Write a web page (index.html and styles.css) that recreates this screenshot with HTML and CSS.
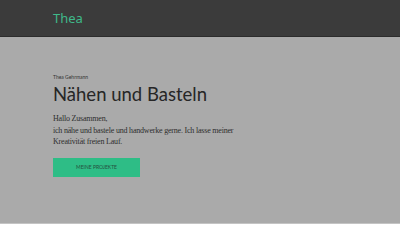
FILE: index.html
```html
<!DOCTYPE html>
<html lang="de">
<head>
  <meta charset="UTF-8" />
  <meta name="viewport" content="width=device-width, initial-scale=1.0" />
  <title>Thea</title>
  <link rel="stylesheet" href="styles.css">
</head>
<body>
  <header class="topbar">
    <a class="brand" href="#">Thea</a>
  </header>

  <section class="hero">
    <p class="eyebrow">Thea Gehrmann</p>
    <h1>Nähen und Basteln</h1>
    <p class="intro">Hallo Zusammen,<br>ich nähe und bastele und handwerke gerne. Ich lasse meiner Kreativität freien Lauf.</p>
    <a class="button" href="#">Meine Projekte</a>
  </section>
</body>
</html>
```

FILE: styles.css
```css
body {
  margin: 0;
  background: #fff;
  font-family: "Lato", "Noto Sans", sans-serif;
}
.topbar {
  height: 36px;
  background: #3b3b3b;
  border-bottom: 1px solid #2c2c2c;
  padding: 0 53px;
  display: flex;
  align-items: center;
}
.brand {
  color: #3fb98a;
  font-family: "Noto Sans", sans-serif;
  font-size: 13px;
  text-decoration: none;
}
.hero {
  background: #aaaaaa;
  border-bottom: 1px solid #c4c4c4;
  padding: 37px 53px 46px;
}
.eyebrow {
  margin: 0;
  font-size: 5px;
  color: #333;
}
h1 {
  margin: 3px 0 8px;
  font-size: 18.5px;
  font-weight: 400;
  color: #262626;
}
.intro {
  margin: 0 0 10px;
  width: 190px;
  font-family: "Liberation Serif", serif;
  font-size: 8px;
  letter-spacing: -0.2px;
  line-height: 11.5px;
  color: #2e2e2e;
}
.button {
  display: flex;
  align-items: center;
  justify-content: center;
  width: 87px;
  height: 19px;
  background: #2ebd86;
  color: #25513f;
  font-size: 5px;
  text-transform: uppercase;
  text-decoration: none;
}
```
